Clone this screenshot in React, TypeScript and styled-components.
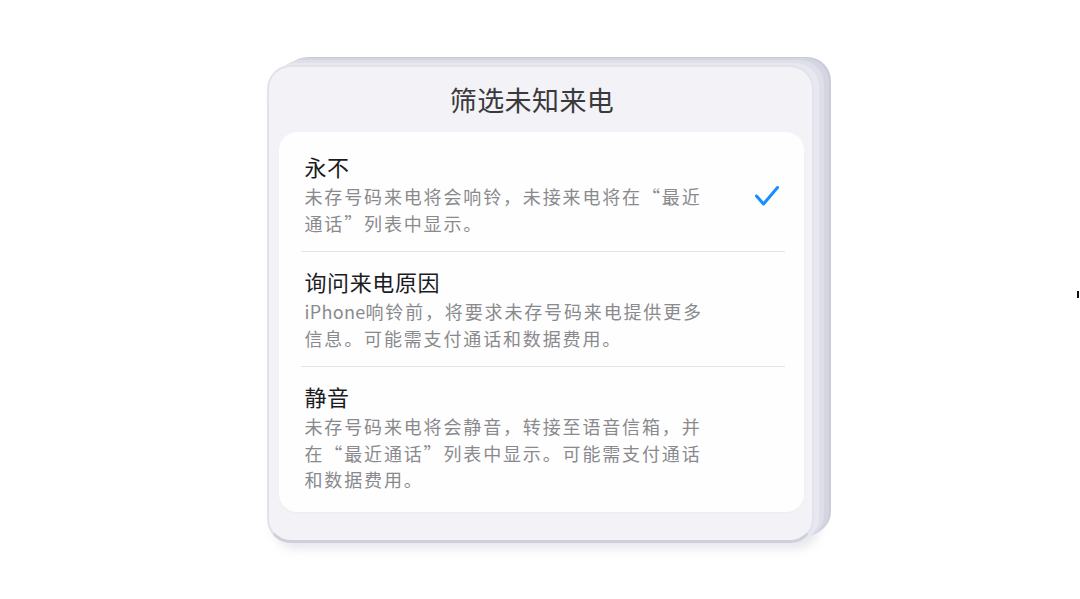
import React from 'react';
import styled, { createGlobalStyle } from 'styled-components';

const GlobalStyle = createGlobalStyle`
  html, body {
    margin: 0;
    padding: 0;
    background: #ffffff;
  }
  body {
    font-family: "Noto Sans CJK SC", "Noto Sans", sans-serif;
  }
`;

const Latin = styled.span`
  letter-spacing: 0.3px;
`;

type Option = {
  title: string;
  lines: React.ReactNode[];
  selected?: boolean;
};

const options: Option[] = [
  {
    title: '永不',
    lines: ['未存号码来电将会响铃，未接来电将在“最近', '通话”列表中显示。'],
    selected: true,
  },
  {
    title: '询问来电原因',
    lines: [
      <>
        <Latin>iPhone</Latin>响铃前，将要求未存号码来电提供更多
      </>,
      '信息。可能需支付通话和数据费用。',
    ],
  },
  {
    title: '静音',
    lines: [
      '未存号码来电将会静音，转接至语音信箱，并',
      '在“最近通话”列表中显示。可能需支付通话',
      '和数据费用。',
    ],
  },
];

function Checkmark() {
  return (
    <svg width="26" height="22" viewBox="0 0 26 22" fill="none">
      <polyline
        points="2.5,11 9.5,19 23.5,2.5"
        stroke="#1a8cff"
        strokeWidth="3"
        strokeLinecap="round"
        strokeLinejoin="round"
      />
    </svg>
  );
}

export default function App() {
  return (
    <>
      <GlobalStyle />
      <Page>
        <Slab>
          <Title>筛选未知来电</Title>
          <Card>
            {options.map((opt, i) => (
              <Row key={opt.title} $first={i === 0} $last={i === options.length - 1}>
                <Texts>
                  <OptionTitle>{opt.title}</OptionTitle>
                  <Desc>
                    {opt.lines.map((l, j) => (
                      <Line key={j}>{l}</Line>
                    ))}
                  </Desc>
                </Texts>
                {opt.selected && (
                  <Check>
                    <Checkmark />
                  </Check>
                )}
              </Row>
            ))}
          </Card>
        </Slab>
        <Tick />
      </Page>
    </>
  );
}

const Page = styled.div`
  position: relative;
  width: 1080px;
  height: 599px;
  display: flex;
  justify-content: center;
  align-items: flex-start;
  padding-top: 65px;
  box-sizing: border-box;
  overflow: hidden;
`;

const Slab = styled.div`
  width: 547px;
  height: 478px;
  box-sizing: border-box;
  border-radius: 24px;
  background: #f2f2f7;
  border: 2px solid #e2e2ea;
  border-bottom: 3px solid #cdcfda;
  box-shadow:
    5px -2px 0 #e8e9f0,
    10px -5px 0 #dedfe9,
    15px -7px 0 #d3d5e1,
    17px -8px 0 #c9cbd8,
    6px 6px 10px rgba(160, 162, 180, 0.25);
  padding: 0 8px 28px 10px;
  display: flex;
  flex-direction: column;
`;

const Title = styled.div`
  height: 65px;
  display: flex;
  align-items: center;
  justify-content: center;
  font-size: 27px;
  color: #3a3a3c;
  letter-spacing: 0.4px;
  padding-right: 18px;
`;

const Card = styled.div`
  flex: 1;
  background: #fefefe;
  border-radius: 18px;
  box-shadow: 0 1px 2px rgba(0, 0, 0, 0.03);
`;

const Row = styled.div<{ $first?: boolean; $last?: boolean }>`
  margin: 0 19px 0 22px;
  padding: ${(p) => (p.$first ? '20px' : '15px')} 5px ${(p) => (p.$last ? '16px' : '15px')} 4px;
  display: flex;
  align-items: center;
  justify-content: space-between;
  border-bottom: ${(p) => (p.$last ? 'none' : '1.5px solid #e3e3e6')};
`;

const Texts = styled.div`
  display: flex;
  flex-direction: column;
`;

const OptionTitle = styled.div`
  font-size: 22px;
  line-height: 29px;
  color: #1c1c1e;
  letter-spacing: 0.6px;
  margin-bottom: 2px;
`;

const Desc = styled.div`
  font-size: 18px;
  line-height: 26.5px;
  color: #8a8a8e;
  letter-spacing: 1.85px;
`;

const Line = styled.span`
  display: block;
  white-space: nowrap;
`;

const Check = styled.div`
  display: flex;
  margin-top: 4px;
`;

const Tick = styled.div`
  position: absolute;
  left: 1077px;
  top: 291px;
  width: 2px;
  height: 7px;
  background: #111;
`;
